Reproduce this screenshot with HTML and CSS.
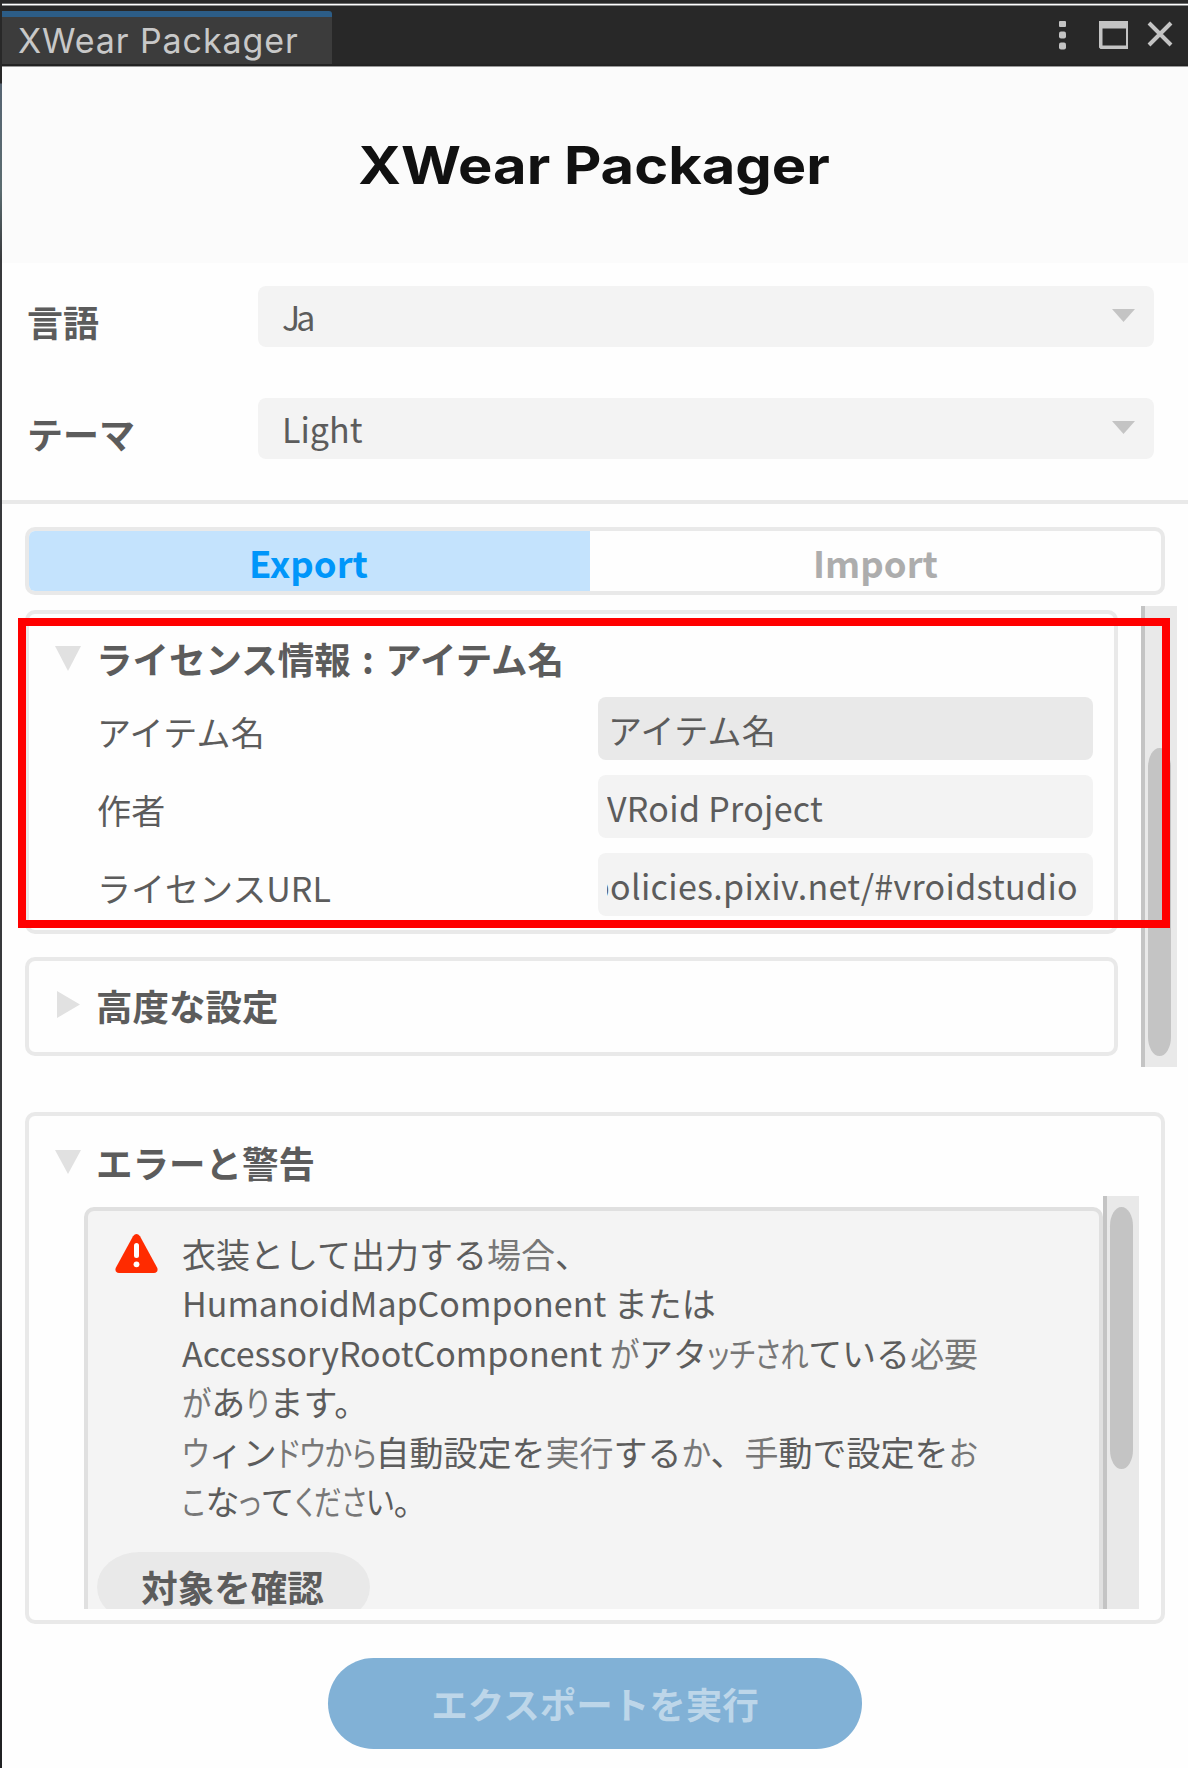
FILE: index.html
```html
<!DOCTYPE html>
<html lang="ja">
<head>
<meta charset="utf-8">
<title>XWear Packager</title>
<link rel="stylesheet" href="styles.css">
</head>
<body>
<div class="window">
  <header class="titlebar">
    <div class="window-tab"><span>XWear Packager</span></div>
    <div class="window-actions">
      <svg class="icon-menu" width="8" height="29" viewBox="0 0 8 29"><rect x="0" y="0" width="7" height="6" rx="1"/><rect x="0" y="10.500" width="7" height="7" rx="2"/><rect x="0" y="21.500" width="7" height="7" rx="2"/></svg>
      <svg class="icon-max" width="29" height="29" viewBox="0 0 29 29"><path fill-rule="evenodd" d="M0 0H29V28H1.500L0 26.500ZM3.500 7.500V24.500H27V7.500Z"/></svg>
      <svg class="icon-close" width="26" height="26" viewBox="0 0 26 26"><path d="M2 2L24 24M24 2L2 24"/></svg>
    </div>
  </header>

  <div class="hero"><h1>XWear Packager</h1></div>

  <section class="settings">
    <div class="setting">
      <span class="label">言語</span>
      <div class="select"><span class="kerned">Ja</span><svg width="23" height="13" viewBox="0 0 23 13"><path d="M0 0H23L11.500 13Z"/></svg></div>
    </div>
    <div class="setting">
      <span class="label">テーマ</span>
      <div class="select">Light<svg width="23" height="13" viewBox="0 0 23 13"><path d="M0 0H23L11.500 13Z"/></svg></div>
    </div>
  </section>

  <nav class="modes">
    <button class="mode active">Export</button>
    <button class="mode">Import</button>
  </nav>

  <section class="options">
    <div class="cards">
      <div class="card license">
        <h2 class="foldout"><svg width="26" height="25" viewBox="0 0 26 25"><path d="M0 0H26L13 25Z"/></svg><span>ライセンス情報 : アイテム名</span></h2>
        <div class="field"><label>アイテム名</label><div class="input readonly"><span>アイテム名</span></div></div>
        <div class="field"><label>作者</label><div class="input"><span>VRoid Project</span></div></div>
        <div class="field"><label class="url">ライセンスURL</label><div class="input scrolled"><span>policies.pixiv.net/#vroidstudio</span></div></div>
      </div>
      <div class="card advanced">
        <h2 class="foldout"><svg width="26" height="27" viewBox="0 0 26 27"><path d="M2 0L25 13.500L2 27Z"/></svg><span>高度な設定</span></h2>
      </div>
    </div>
    <div class="scrollbar"><div class="thumb"></div></div>
    <div class="highlight"></div>
  </section>

  <section class="card errors">
    <h2 class="foldout"><svg width="26" height="24" viewBox="0 0 26 24"><path d="M0 0H26L13 24Z"/></svg><span>エラーと警告</span></h2>
    <div class="error-view">
      <div class="error-box">
        <div class="message">
          <svg class="warning" width="43" height="39" viewBox="0 0 43 39"><path class="sign" d="M18 2.200Q21.500-2 25 2.200L42.300 34Q43.500 38.500 39 39H4Q-.5 38.500.7 34Z"/><path class="mark" d="M21.500 11.500V21.500"/><circle cx="21.500" cy="30.300" r="2.900"/></svg>
          <p>
            <span class="line">衣装として出力する<i>場合</i>、</span>
            <span class="line">HumanoidMapComponent または</span>
            <span class="line">AccessoryRootComponent <i class="narrow">が</i>アタ<i class="narrow run4">ッチされ</i>ている<i>必要</i></span>
            <span class="line"><i class="narrow">が</i>あ<i class="narrow">り</i>ます。</span>
            <span class="line"><i class="narrow">ウ</i>ィン<i class="narrow run4">ドウから</i>自動設定を<i>実行</i>する<i class="narrow">か</i>、<i>手</i>動で設定を<i class="narrow">お</i></span>
            <span class="line"><i class="narrow run1">こ</i>な<i class="narrow run1">っ</i>て<i class="narrow run3">くださ</i><b class="narrow">い</b>。</span>
          </p>
        </div>
        <button class="check">対象を確認</button>
      </div>
      <div class="scrollbar"><div class="thumb"></div></div>
    </div>
  </section>

  <button class="run">エクスポートを実行</button>
</div>
</body>
</html>
```
FILE: styles.css
```css
* { box-sizing: border-box; }

body {
  margin: 0;
  width: 1188px;
  height: 1768px;
  overflow: hidden;
  padding-left: 2px;
  background: linear-gradient(#282828 83px, #566472 84px, #5b6c70 190px, #38393c 260px, #38393c 1300px, #202123 1400px);
  color: #5c5c5c;
  font-family: "Noto Sans CJK JP", sans-serif;
  font-size: 34px;
}

h1, h2, p { margin: 0; }
button { border: 0; padding: 0; font: inherit; color: inherit; }
i { font-style: normal; }
b { font-weight: 400; }

.window {
  display: flex;
  flex-direction: column;
  width: 1186px;
  height: 1768px;
  background: #fefefe;
}

/* Title bar */
.titlebar {
  flex: none;
  display: flex;
  justify-content: space-between;
  height: 67px;
  padding-top: 11px;
  background: linear-gradient(#282828 3px, #6c6d6d 3px, #6c6d6d 4px, #fff 4px, #fff 5px, #8d8f8e 5px, #8d8f8e 6px, #282828 6px, #282828 63px, #202020 66px, #999 66px);
}
.window-tab {
  width: 330px;
  height: 53px;
  padding-left: 16px;
  border-top: 6px solid #2c5d87;
  border-top-right-radius: 3px;
  background: #3c3c3c;
  color: #c8c8c8;
  font: 400 34px/47px Inter, sans-serif;
  letter-spacing: .9px;
  white-space: nowrap;
}
.window-actions {
  display: flex;
  align-items: flex-start;
  padding: 10px 15px 0 0;
  fill: #c4c4c4;
}
.icon-menu { margin-right: 32px; }
.icon-max { margin-right: 19px; }
.icon-close { stroke: #c4c4c4; stroke-width: 4; }

/* Product heading */
.hero {
  flex: none;
  display: flex;
  justify-content: center;
  height: 196px;
  padding: 69px 2px 0 0;
  background: #fbfbfb;
}
.hero h1 {
  color: #111;
  font: 700 52px/60px Inter, sans-serif;
  white-space: nowrap;
  transform: scaleX(1.112);
}

/* Settings */
.settings {
  flex: none;
  display: flex;
  flex-direction: column;
  gap: 51px;
  height: 241px;
  padding: 23px 34px 0 25px;
  border-bottom: 4px solid #e9e9e9;
}
.setting { display: flex; height: 61px; }
.label {
  width: 231px;
  padding-top: 3px;
  font-size: 36px;
  font-weight: 700;
  line-height: 64px;
}
.select {
  flex: 1;
  display: flex;
  justify-content: space-between;
  padding: 0 19px 0 24px;
  border-radius: 8px;
  background: #f3f3f3;
  line-height: 62px;
}
.select svg { margin-top: 23px; fill: #c4c4c4; }
.kerned { letter-spacing: -4px; }

/* Export / import switch */
.modes {
  flex: none;
  display: flex;
  width: 1140px;
  height: 68px;
  margin: 23px 0 0 23px;
  border: 4px solid #e9e9e9;
  border-radius: 10px;
  overflow: hidden;
}
.mode {
  flex: 1;
  height: 60px;
  background: none;
  color: #adadad;
  font-size: 36.500px;
  font-weight: 700;
  line-height: 63px;
}
.mode.active {
  flex: none;
  width: 561px;
  padding-right: 2px;
  background: #c4e3fd;
  color: #0096fa;
}

/* Scrollable options */
.options {
  position: relative;
  flex: none;
  display: flex;
  justify-content: space-between;
  height: 461px;
  margin: 11px 11px 0 23px;
}
.cards {
  display: flex;
  flex-direction: column;
  gap: 23px;
  width: 1093px;
  padding-top: 4px;
}
.card {
  border: 4px solid #e9e9e9;
  border-radius: 10px;
  background: #fefefe;
}
.foldout {
  display: flex;
  gap: 15px;
  height: 48px;
  font-size: 36.500px;
  font-weight: 700;
  line-height: 50px;
  white-space: nowrap;
}
.foldout svg { margin-top: 12px; fill: #e1e1e1; }
.license { height: 324px; padding: 20px 21px 0 26px; }
.license .foldout { margin-bottom: 15px; word-spacing: 3px; }
.field { display: flex; justify-content: space-between; height: 63px; margin-bottom: 15px; letter-spacing: .3px; }
.field label { padding-left: 42px; line-height: 70px; }
.field .url { letter-spacing: 0; }
.input {
  width: 495px;
  padding: 0 9px;
  border-radius: 8px;
  background: #f3f3f3;
  line-height: 66px;
}
.input span { display: block; height: 63px; overflow: hidden; white-space: nowrap; }
.readonly { background: #e9e9e9; }
.readonly span { padding-left: 1px; }
.scrolled { padding-right: 15px; }
.scrolled span { display: flex; justify-content: flex-end; }
.advanced { height: 99px; padding: 20px 0 0 26px; }
.advanced svg { margin-top: 10px; }

.scrollbar {
  flex: none;
  width: 36px;
  border-left: 4px solid #c4c4c4;
  background: #e9e9e9;
}
.thumb { width: 23px; margin-left: 3px; border-radius: 12px / 20px; background: #c4c4c4; }
.options .thumb { height: 308px; margin-top: 142px; }

.highlight {
  position: absolute;
  left: -7px;
  top: 12px;
  width: 1152px;
  height: 310px;
  border: 8px solid #f00;
}

/* Errors and warnings */
.errors {
  flex: none;
  width: 1140px;
  height: 512px;
  margin: 45px 0 0 23px;
  padding: 22px 22px 0 26px;
}
.error-view {
  display: flex;
  height: 413px;
  margin: 10px 0 0 29px;
  overflow: hidden;
}
.error-box {
  flex: 1;
  height: 480px;
  margin-top: 11px;
  padding: 18px 9px 0;
  border: 4px solid #e0e0e0;
  border-radius: 10px;
  background: #f4f4f4;
}
.message { display: flex; height: 323px; padding-left: 18px; gap: 24px; }
.warning { margin-top: 5px; fill: #ff2b00; }
.mark { stroke: #fff; stroke-width: 5; stroke-linecap: round; }
.warning circle { fill: #fff; }
.line { display: block; height: 49.400px; line-height: 49.400px; white-space: nowrap; }
.message i { color: #777; }

.narrow {
  display: inline-block;
  margin-right: -4px;
  transform: scaleX(.87);
  transform-origin: left;
  font-feature-settings: "palt";
}
.run1 { margin-right: -6px; transform: scaleX(.8); }
.run3 { margin-right: -17px; transform: scaleX(.81); }
.run4 { margin-right: -21px; transform: scaleX(.83); }

.check {
  display: block;
  width: 273px;
  height: 70px;
  padding-right: 2px;
  border-radius: 42px / 35px;
  background: #e9e9e9;
  font-size: 36.500px;
  font-weight: 700;
  line-height: 68px;
}
.error-view .thumb { height: 262px; margin-top: 11px; }

/* Run button */
.run {
  flex: none;
  width: 534px;
  height: 91px;
  margin: 34px 0 0 326px;
  border-radius: 46px;
  background: #81b1d6;
  color: #bdd6e9;
  font-size: 36.500px;
  font-weight: 700;
  line-height: 91px;
}
```
